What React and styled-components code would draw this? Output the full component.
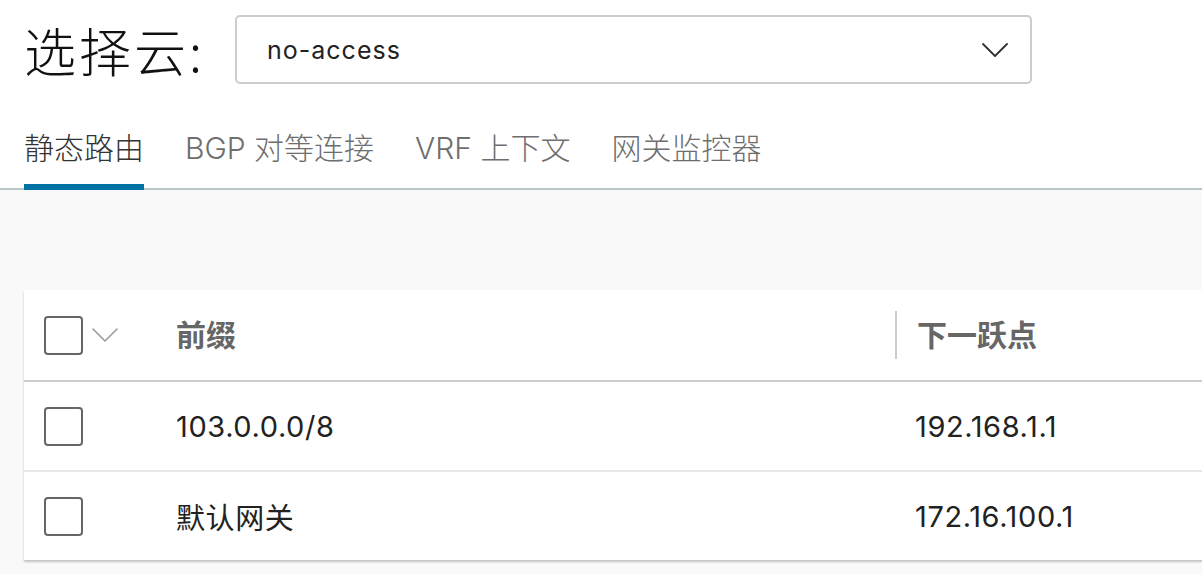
import React from 'react';
import styled, {createGlobalStyle} from 'styled-components';

const GlobalStyle = createGlobalStyle`
   html, body {
      margin: 0;
      padding: 0;
      background: #ffffff;
      overflow: hidden;
   }
   body {
      font-family: "Inter", "Noto Sans CJK SC", sans-serif;
      color: #333333;
   }
`;

const Page = styled.div`
   display: flex;
   flex-direction: column;
   width: 1202px;
   height: 574px;
`;

const CloudRow = styled.div`
   display: flex;
   align-items: center;
   gap: 30px;
   padding: 15px 24px 0 24px;
`;

const CloudLabel = styled.div`
   font-family: "Noto Sans CJK SC", sans-serif;
   font-weight: 300;
   font-size: 52px;
   letter-spacing: 3px;
   line-height: 69px;
   color: #111111;
`;

const SelectBox = styled.div`
   display: flex;
   align-items: center;
   justify-content: space-between;
   box-sizing: border-box;
   width: 797px;
   height: 69px;
   padding: 0 22px 0 30px;
   border: 2px solid #cccccc;
   border-radius: 5px;
   font-size: 25px;
   letter-spacing: 1px;
   color: #222222;
`;

const TabBar = styled.div`
   display: flex;
   gap: 41px;
   margin-top: 44px;
   padding: 0 24px;
   border-bottom: 2px solid #b9c6c9;
`;

const Tab = styled.div`
   position: relative;
   padding-bottom: 20px;
   font-family: "Inter", "Noto Sans CJK SC", sans-serif;
   font-size: 30px;
   line-height: 40px;
   color: ${props => props.active ? '#333333' : '#6e6e6e'};
   font-weight: 300;
   &::after {
      content: '';
      position: absolute;
      left: 0;
      right: 0;
      bottom: -2px;
      height: 6px;
      background: ${props => props.active ? '#0072a3' : 'transparent'};
   }
`;

const Content = styled.div`
   flex: 1;
   background: #f9f9f9;
   padding: 100px 0 0 24px;
`;

const Card = styled.div`
   width: 1260px;
   background: #ffffff;
   box-shadow: 0 2px 2px rgba(0, 0, 0, 0.22);
`;

const Row = styled.div`
   display: grid;
   grid-template-columns: 126px 745px 1fr;
   align-items: center;
   height: ${props => props.header ? '90px' : '88px'};
   border-bottom: 2px solid ${props => props.header ? '#cccccc' : '#e8e8e8'};
   &:last-child {
      border-bottom: none;
   }
`;

const SelectCell = styled.div`
   display: flex;
   align-items: center;
   gap: 9px;
   padding-left: 20px;
`;

const Checkbox = styled.div`
   box-sizing: border-box;
   width: 39px;
   height: 39px;
   border: 2px solid #666666;
   border-radius: 4px;
`;

const HeaderCell = styled.div`
   display: flex;
   align-items: center;
   height: 48px;
   padding-left: ${props => props.divided ? '20px' : '26px'};
   border-left: ${props => props.divided ? '2px solid #cccccc' : 'none'};
   font-family: "Noto Sans CJK SC", sans-serif;
   font-weight: 700;
   font-size: 30px;
   line-height: 42px;
   color: #666666;
   padding-bottom: 4px;
   box-sizing: border-box;
`;

const Cell = styled.div`
   padding-left: ${props => props.last ? '20px' : '26px'};
   font-family: "Inter", "Noto Sans CJK SC", sans-serif;
   font-size: 29px;
   font-weight: 400;
   letter-spacing: 0.6px;
   color: #222222;
`;

const Chevron = ({width, height, color, stroke}) => (
   <svg width={width} height={height} viewBox="0 0 26 14" fill="none">
      <path d="M1 1 L13 13 L25 1" stroke={color} strokeWidth={stroke} strokeLinecap="round" strokeLinejoin="round"/>
   </svg>
);

const routes = [
   {prefix: '103.0.0.0/8', next_hop: '192.168.1.1'},
   {prefix: '默认网关', next_hop: '172.16.100.1'},
];

const tabs = ['静态路由', 'BGP 对等连接', 'VRF 上下文', '网关监控器'];

export default function App() {
   return <Page>
      <GlobalStyle/>
      <CloudRow>
         <CloudLabel>选择云:</CloudLabel>
         <SelectBox>
            <span>no-access</span>
            <Chevron width={26} height={14} color="#333333" stroke={1.8}/>
         </SelectBox>
      </CloudRow>
      <TabBar>
         {tabs.map((tab, index) => <Tab key={tab} active={index === 0}>{tab}</Tab>)}
      </TabBar>
      <Content>
         <Card>
            <Row header>
               <SelectCell>
                  <Checkbox/>
                  <Chevron width={26} height={14} color="#999999" stroke={1.5}/>
               </SelectCell>
               <HeaderCell>前缀</HeaderCell>
               <HeaderCell divided>下一跃点</HeaderCell>
            </Row>
            {routes.map(route => <Row key={route.prefix}>
               <SelectCell><Checkbox/></SelectCell>
               <Cell>{route.prefix}</Cell>
               <Cell last>{route.next_hop}</Cell>
            </Row>)}
         </Card>
      </Content>
   </Page>
}
